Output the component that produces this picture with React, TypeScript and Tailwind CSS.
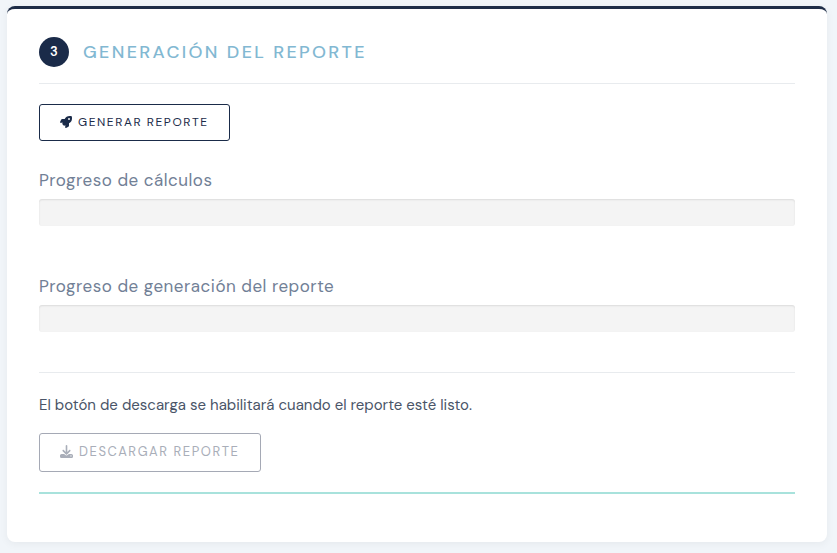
import { FaRocket } from "react-icons/fa";
import { FaDownload } from "react-icons/fa6";

type ProgressProps = {
  id: string;
  label: string;
  value: number;
};

const Progress = ({ id, label, value }: ProgressProps) => {
  return (
    <div>
      <h3 id={id} className="text-[17px] leading-[25px] tracking-[0.03em] text-[#718096]">
        {label}
      </h3>
      <div
        role="progressbar"
        aria-labelledby={id}
        aria-valuenow={value}
        aria-valuemin={0}
        aria-valuemax={100}
        className="mt-1.5 h-[27px] overflow-hidden rounded-[3px] bg-[#f4f4f4] shadow-[inset_0_1px_2px_rgba(0,0,0,0.1)]"
      >
        <div className="h-full bg-[#1a2b49]" style={{ width: `${value}%` }} />
      </div>
    </div>
  );
};

export default function App() {
  return (
    <main className="min-h-screen bg-[#f1f5f9] pt-1.5 pr-2.5 pb-2.5 pl-[7px] font-['DM_Sans','Inter',sans-serif]">
      <section className="rounded-lg border-t-3 border-[#1e2d47] bg-white px-8 pt-7 pb-12 shadow-[0_2px_8px_rgba(0,0,0,0.05)]">
        {/* Step header */}
        <header className="flex items-center gap-3.5 border-b border-[#e8ebee] pb-4">
          <span className="flex size-[30px] items-center justify-center rounded-full bg-[#1a2b49] text-[13px] font-semibold text-white">
            3
          </span>
          <h2 className="text-lg font-medium uppercase tracking-[0.13em] text-[#82b8d2]">
            Generación del reporte
          </h2>
        </header>

        <button
          type="button"
          className="mt-5 flex h-[37px] items-center gap-1.5 rounded-[3px] border border-[#1a2b49] px-5 pb-0.5 text-xs uppercase tracking-[0.13em] text-[#1a2b49]"
        >
          <FaRocket className="size-3" />
          Generar reporte
        </button>

        <div className="mt-[27px] flex flex-col gap-12">
          <Progress id="calculos" label="Progreso de cálculos" value={0} />
          <Progress id="generacion" label="Progreso de generación del reporte" value={0} />
        </div>

        <hr className="mt-10 border-[#e8ebee]" />

        <p className="mt-5 text-[15px] leading-6 text-[#4a5568]">
          El botón de descarga se habilitará cuando el reporte esté listo.
        </p>
        <button
          type="button"
          disabled
          className="mt-4 flex h-[39px] items-center gap-1.5 rounded-[3px] border border-[#a5a9b5] px-5 pb-0.5 text-[13px] uppercase tracking-[0.12em] text-[#a9aeb9]"
        >
          <FaDownload className="size-[13px]" />
          Descargar reporte
        </button>

        <hr className="mt-5 border-t-2 border-[#a8e2dc]" />
      </section>
    </main>
  );
}
